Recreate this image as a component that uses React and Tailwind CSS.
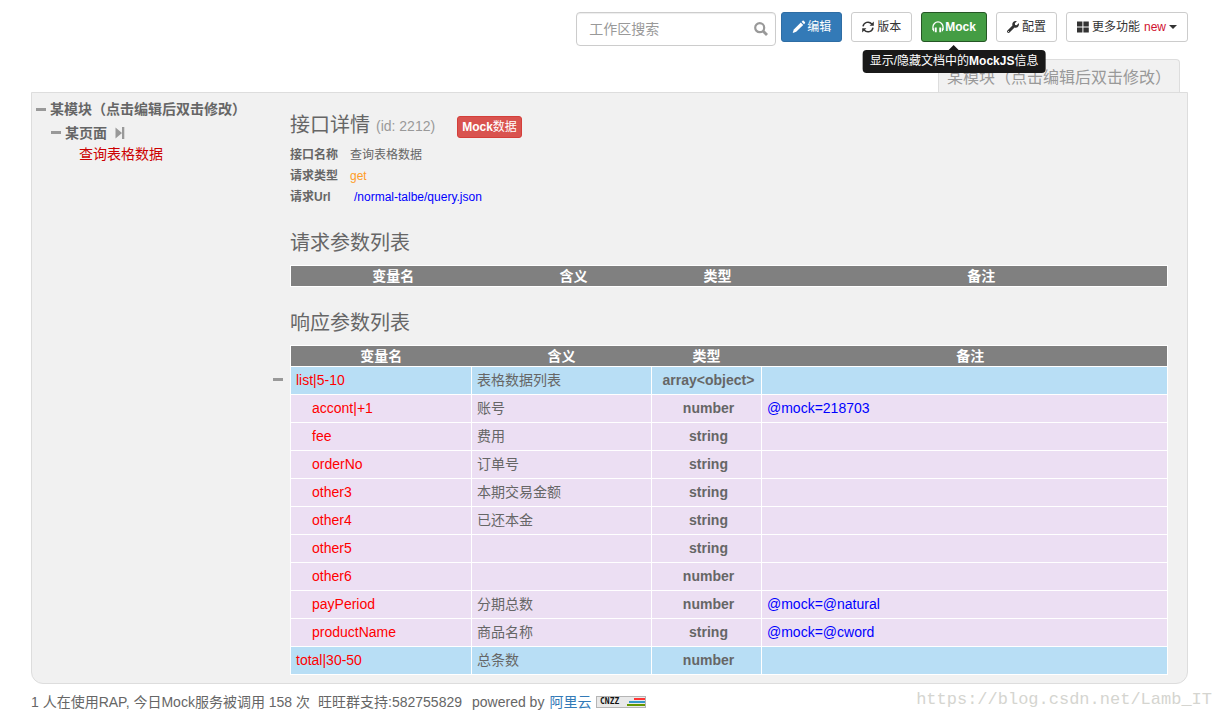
import React from 'react';
import clsx from 'clsx';
import { FaWrench } from 'react-icons/fa';

const MODULE_NAME = '某模块（点击编辑后双击修改）';

const responseParams = [
  { name: 'list|5-10', meaning: '表格数据列表', type: 'array<object>', remark: '', root: true, expandable: true },
  { name: 'accont|+1', meaning: '账号', type: 'number', remark: '@mock=218703' },
  { name: 'fee', meaning: '费用', type: 'string', remark: '' },
  { name: 'orderNo', meaning: '订单号', type: 'string', remark: '' },
  { name: 'other3', meaning: '本期交易金额', type: 'string', remark: '' },
  { name: 'other4', meaning: '已还本金', type: 'string', remark: '' },
  { name: 'other5', meaning: '', type: 'string', remark: '' },
  { name: 'other6', meaning: '', type: 'number', remark: '' },
  { name: 'payPeriod', meaning: '分期总数', type: 'number', remark: '@mock=@natural' },
  { name: 'productName', meaning: '商品名称', type: 'string', remark: '@mock=@cword' },
  { name: 'total|30-50', meaning: '总条数', type: 'number', remark: '', root: true },
];

function SearchIcon() {
  return (
    <svg viewBox="0 0 14 14" className="size-3.5" fill="none" stroke="currentColor">
      <circle cx="5.7" cy="5.7" r="4.5" strokeWidth="2.2" />
      <path d="M9 9l4 4" strokeWidth="2.8" />
    </svg>
  );
}

function PencilIcon() {
  return (
    <svg viewBox="0 0 14 14" className="size-3.5" fill="currentColor">
      <path d="M0.6 13l1.2-3.6L8.8 2.6l2.4 2.4-7 6.8z" />
      <path d="M9.6 1.8l0.9-0.9c0.4-0.4 0.9-0.4 1.3 0l1.1 1.1c0.4 0.4 0.4 0.9 0 1.3l-0.9 0.9z" />
    </svg>
  );
}

function RefreshIcon() {
  return (
    <svg viewBox="0 0 12 12" className="mr-0.5 size-3" fill="none" stroke="currentColor" strokeWidth="1.5">
      <path d="M1 5.4A5 5 0 0 1 9.8 3M11 6.6A5 5 0 0 1 2.2 9" />
      <path d="M11.8 0.6v4.2H7.6zM0.2 11.4V7.2h4.2z" fill="currentColor" stroke="none" />
    </svg>
  );
}

function HeadphonesIcon() {
  return (
    <svg viewBox="0 0 14 14" className="size-3" fill="none" stroke="currentColor">
      <path d="M1.1 10.5V7a5.9 5.9 0 0 1 11.8 0v3.5" strokeWidth="1.5" />
      <path d="M4.4 7.5v5.5M9.6 7.5v5.5" strokeWidth="2.2" />
      <path d="M1.8 8.5v3.5M12.2 8.5v3.5" strokeWidth="1.4" />
    </svg>
  );
}

function BlocksIcon() {
  return (
    <svg viewBox="0 0 12 12" className="size-3" fill="currentColor">
      <path d="M0 0.5h5.4v5H0zM6.4 0.5h5.4v5H6.4zM0 6.5h5.4v5H0zM6.4 6.5h5.4v5H6.4z" />
    </svg>
  );
}

function StepForwardIcon() {
  return (
    <svg viewBox="0 0 10 12" className="h-3 w-2.5 text-[#999]" fill="currentColor">
      <path d="M0.5 0.5L7 6l-6.5 5.5zM7 0h2.3v12H7z" />
    </svg>
  );
}

function CnzzBadge() {
  return (
    <svg viewBox="0 0 50 12" className="h-3 w-[50px]" shapeRendering="crispEdges">
      <rect x="0.5" y="0.5" width="49" height="11" fill="#e9e9e9" stroke="#b5b5b5" />
      <text x="4" y="8" fontSize="8" fontWeight="bold" fontFamily="DejaVu Sans Mono, monospace" fill="#111">CNZZ</text>
      <path d="M38 2h11v2H38z" fill="#f33" />
      <path d="M33 5h16v2H33z" fill="#39c" />
      <path d="M31 8h18v2H31z" fill="#690" />
    </svg>
  );
}

function ToggleButton({ label, className }) {
  return (
    <button type="button" aria-label={label} className={clsx('flex h-4 w-2.5 shrink-0 items-center', className)}>
      <span className="h-[3px] w-full bg-[#999]" />
    </button>
  );
}

function ToolButton({ className, children }) {
  return (
    <button
      type="button"
      className={clsx('flex h-[30px] items-center gap-px rounded-[3px] border px-2.5 text-xs whitespace-nowrap', className)}
    >
      {children}
    </button>
  );
}

function Toolbar() {
  const plain = 'border-[#ccc] bg-white text-[#333]';

  return (
    <header className="flex items-start justify-end gap-[9px] pt-3 pr-[35px]">
      <div className="flex items-start gap-[5px]">
        <label className="flex h-[34px] w-[200px] items-center rounded border border-[#ccc] bg-white pr-[7px] pl-3 text-[#999] shadow-[inset_0_1px_1px_rgba(0,0,0,0.075)]">
          <input
            type="text"
            aria-label="工作区搜索"
            placeholder="工作区搜索"
            className="min-w-0 flex-1 bg-transparent text-sm text-[#555] outline-none placeholder:text-[#999]"
          />
          <SearchIcon />
        </label>
        <ToolButton className="border-[#2e6da4] bg-[#337ab7] text-white">
          <PencilIcon />
          编辑
        </ToolButton>
      </div>
      <ToolButton className={plain}>
        <RefreshIcon />
        版本
      </ToolButton>
      <div className="relative">
        <ToolButton className="border-[#255625] bg-[#449d44] font-bold text-white">
          <HeadphonesIcon />
          Mock
        </ToolButton>
        <div role="tooltip" className="absolute top-full left-1/2 z-10 -translate-x-1/2 pt-2">
          <span className="absolute top-[3px] left-1/2 -translate-x-1/2 border-x-[5px] border-b-[5px] border-x-transparent border-b-[#191919]" />
          <div className="rounded bg-[#191919] px-[7px] text-xs leading-[23px] whitespace-nowrap text-white">
            显示/隐藏文档中的<b>MockJS</b>信息
          </div>
        </div>
      </div>
      <ToolButton className={plain}>
        <FaWrench className="mr-0.5 size-3" />
        配置
      </ToolButton>
      <ToolButton className={plain}>
        <BlocksIcon />
        <span className="ml-0.5">更多功能</span>
        <span className="ml-[3px] text-[#d01030]">new</span>
        <span className="ml-0.5 border-x-4 border-t-4 border-x-transparent border-t-[#333]" />
      </ToolButton>
    </header>
  );
}

function Sidebar() {
  return (
    <aside className="w-[241px] shrink-0 pt-1 pl-1 text-sm whitespace-nowrap text-[#666]">
      <div className="flex h-6 items-center gap-1 font-bold">
        <ToggleButton label="收起模块" />
        {MODULE_NAME}
      </div>
      <div className="flex h-[23px] items-center gap-1 pl-[15px] font-bold">
        <ToggleButton label="收起页面" />
        某页面
        <span className="ml-1">
          <StepForwardIcon />
        </span>
      </div>
      <a href="#action" className="ml-[43px] block leading-5 text-[#c00]">
        查询表格数据
      </a>
    </aside>
  );
}

function HeadRow({ widths }) {
  return (
    <thead>
      <tr className="h-[21px] bg-[#808080] leading-5 text-white">
        <th className={clsx('border-y border-l border-white p-0', widths[0])}>变量名</th>
        <th className={clsx('border-y border-white p-0', widths[1])}>含义</th>
        <th className={clsx('border-y border-white p-0', widths[2])}>类型</th>
        <th className="border-y border-r border-white p-0 pl-3">备注</th>
      </tr>
    </thead>
  );
}

function ParamRow({ param }) {
  const cell = 'border border-white pt-0 pb-0.5 leading-5';

  return (
    <tr className={clsx('h-7', param.root ? 'bg-[#b8def5]' : 'bg-[#ecdff3]')}>
      <td className={clsx(cell, 'relative text-[#f00]', param.root ? 'pl-[5px]' : 'pl-[21px]')}>
        {param.expandable && <ToggleButton label="收起参数" className="absolute top-1 -left-[18px]" />}
        {param.name}
      </td>
      <td className={clsx(cell, 'pl-[5px]')}>{param.meaning}</td>
      <td className={clsx(cell, 'pl-1 text-center font-bold')}>{param.type}</td>
      <td className={clsx(cell, 'pl-[5px] text-[#00f]')}>{param.remark}</td>
    </tr>
  );
}

function Detail({ label, className, children }) {
  return (
    <div className="flex h-[21px] items-center text-xs">
      <dt className="w-[60px] font-bold">{label}</dt>
      <dd className={className}>{children}</dd>
    </div>
  );
}

function ActionDetail() {
  return (
    <main className="min-w-0 flex-1 pt-[17px] pr-[19px] pb-2 pl-[17px] text-sm text-[#666]">
      <div className="flex h-[30px] items-center">
        <h2 className="text-xl">接口详情</h2>
        <small className="mt-0.5 ml-1.5 text-sm text-[#999]">(id: 2212)</small>
        <button
          type="button"
          className="mt-1 ml-[22px] h-[22px] rounded-[3px] border border-[#d43f3a] bg-[#d9534f] px-1 text-xs text-white"
        >
          <b>Mock</b>数据
        </button>
      </div>

      <dl className="mt-1">
        <Detail label="接口名称">查询表格数据</Detail>
        <Detail label="请求类型" className="text-[#ff9c27]">get</Detail>
        <Detail label="请求Url" className="pl-1 text-[#00f]">/normal-talbe/query.json</Detail>
      </dl>

      <h2 className="mt-[22px] mb-2 text-xl leading-7">请求参数列表</h2>
      <table className="w-full table-fixed border-collapse">
        <HeadRow widths={['w-[205px]', 'w-[156px]', 'w-[132px]']} />
      </table>

      <h2 className="mt-[22px] mb-2 text-xl leading-7">响应参数列表</h2>
      <table className="w-full table-fixed border-collapse">
        <HeadRow widths={['w-[181px]', 'w-[180px]', 'w-[110px]']} />
        <tbody>
          {responseParams.map((param) => (
            <ParamRow key={param.name} param={param} />
          ))}
        </tbody>
      </table>
    </main>
  );
}

export default function App() {
  return (
    <div className="bg-white font-['Liberation_Sans','Noto_Sans_CJK_SC',sans-serif]">
      <Toolbar />
      <nav className="mt-[13px] mr-[43px] flex justify-end">
        <a
          href="#module"
          className="flex h-[33px] items-center rounded-tr border-t border-x border-[#ddd] bg-[#f1f1f1] px-2 pt-1 text-base text-[#999]"
        >
          {MODULE_NAME}
        </a>
      </nav>
      <div className="mr-[35px] ml-[31px] flex rounded-b-xl border border-[#ddd] bg-[#f1f1f1]">
        <Sidebar />
        <ActionDetail />
      </div>
      <footer className="flex h-9 items-center justify-between pr-[11px] pl-[31px] text-sm whitespace-nowrap text-[#666]">
        <p className="flex items-center">
          1 人在使用RAP, 今日Mock服务被调用 158 次
          <span className="ml-2">旺旺群支持:582755829</span>
          <span className="mr-[5px] ml-2.5">powered by</span>
          <a href="#aliyun" className="mr-[5px] text-[#337ab7]">阿里云</a>
          <CnzzBadge />
        </p>
        <span className="mb-1 font-['Liberation_Mono',monospace] text-[17px] text-[#d5d5d0]">
          https://blog.csdn.net/Lamb_IT
        </span>
      </footer>
    </div>
  );
}
